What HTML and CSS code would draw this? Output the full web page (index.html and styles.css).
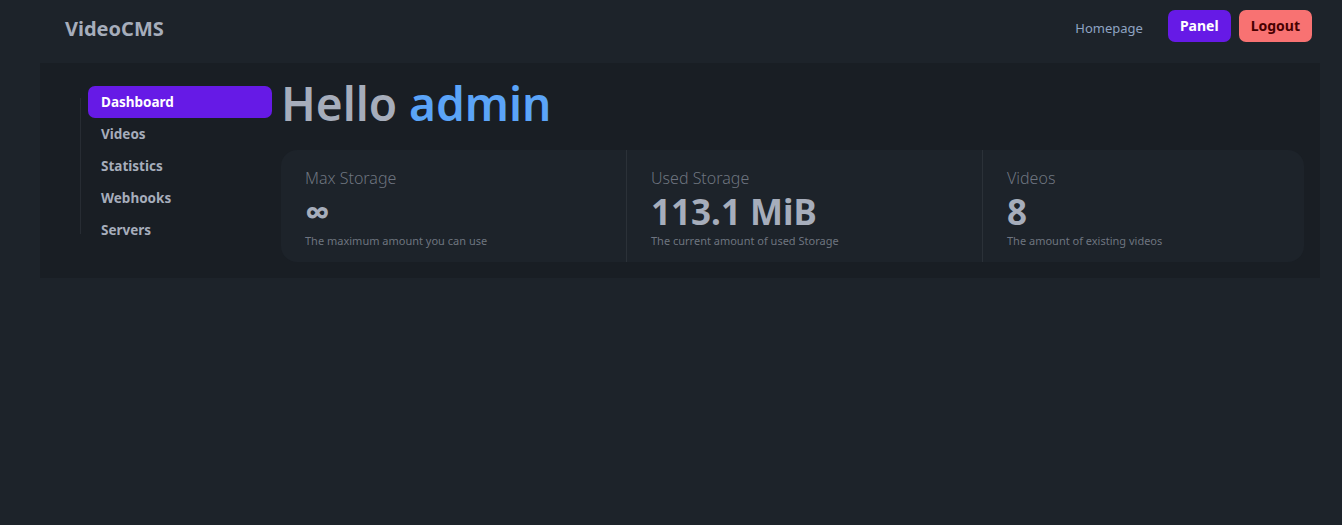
FILE: index.html
```html
<!DOCTYPE html>
<html lang="en">
<head>
<meta charset="utf-8">
<title>VideoCMS</title>
<link rel="stylesheet" href="styles.css">
</head>
<body>
<header class="navbar">
  <a class="brand" href="#">VideoCMS</a>
  <nav class="nav-actions">
    <a class="nav-link" href="#">Homepage</a>
    <a class="btn btn-primary" href="#">Panel</a>
    <a class="btn btn-error" href="#">Logout</a>
  </nav>
</header>
<main class="panel">
  <aside class="sidebar">
    <ul class="menu">
      <li><a class="menu-item active" href="#">Dashboard</a></li>
      <li><a class="menu-item" href="#">Videos</a></li>
      <li><a class="menu-item" href="#">Statistics</a></li>
      <li><a class="menu-item" href="#">Webhooks</a></li>
      <li><a class="menu-item" href="#">Servers</a></li>
    </ul>
  </aside>
  <section class="content">
    <h1 class="greeting">Hello <span class="accent">admin</span></h1>
    <div class="stats">
      <div class="stat">
        <div class="stat-title">Max Storage</div>
        <div class="stat-value">∞</div>
        <div class="stat-desc">The maximum amount you can use</div>
      </div>
      <div class="stat">
        <div class="stat-title">Used Storage</div>
        <div class="stat-value">113.1 MiB</div>
        <div class="stat-desc">The current amount of used Storage</div>
      </div>
      <div class="stat">
        <div class="stat-title">Videos</div>
        <div class="stat-value">8</div>
        <div class="stat-desc">The amount of existing videos</div>
      </div>
    </div>
  </section>
</main>
</body>
</html>
```

FILE: styles.css
```css
* { box-sizing: border-box; }

html, body {
  margin: 0;
  padding: 0;
}

body {
  background: #1d232a;
  color: #a6adbb;
  font-family: "Noto Sans", "Open Sans", sans-serif;
  min-height: 525px;
}

a { text-decoration: none; color: inherit; }

.navbar {
  height: 63px;
  display: flex;
  align-items: center;
  justify-content: space-between;
  padding: 0 30px 0 65px;
}

.brand {
  font-size: 20px;
  font-weight: 700;
  color: #a6adbb;
  margin-top: -6px;
}

.nav-actions {
  display: flex;
  align-items: center;
  gap: 8px;
  margin-top: -12px;
}

.nav-link {
  font-size: 13px;
  color: #8fa3c2;
  margin-right: 17px;
  margin-top: 4px;
}

.btn {
  height: 32px;
  display: flex;
  align-items: center;
  justify-content: center;
  padding: 0 12px 1px;
  border-radius: 7px;
  font-size: 14px;
  font-weight: 700;
}

.btn-primary {
  background: #661ae6;
  color: #ffffff;
}

.btn-error {
  background: #f87272;
  color: #470000;
}

.panel {
  width: 1280px;
  margin-left: 40px;
  background: #191e24;
  display: flex;
  gap: 9px;
  padding: 16px 16px 16px 40px;
}

.sidebar {
  width: 192px;
  flex-shrink: 0;
}

.menu {
  list-style: none;
  margin: 7px 0 0 0;
  padding: 0 0 0 8px;
  position: relative;
}

.menu::before {
  content: "";
  position: absolute;
  left: 0;
  top: 12px;
  bottom: 12px;
  width: 1px;
  background: rgba(166, 173, 187, 0.1);
}

.menu-item {
  display: flex;
  align-items: center;
  height: 32px;
  padding: 0 13px 1px;
  border-radius: 7px;
  font-size: 13.5px;
  font-weight: 700;
  color: #a6adbb;
}

.menu-item.active {
  background: #661ae6;
  color: #ffffff;
}

.content {
  flex: 1;
  min-width: 0;
}

.greeting {
  margin: 0 0 23px 0;
  font-size: 46px;
  line-height: 48px;
  font-weight: 600;
  color: #a6adbb;
}

.accent { color: #5ba4f8; }

.stats {
  display: grid;
  grid-template-columns: 345fr 356fr 322fr;
  background: #1d232a;
  border-radius: 16px;
}

.stat {
  padding: 17px 24px 14px;
  display: flex;
  flex-direction: column;
}

.stat + .stat {
  border-left: 1px solid rgba(166, 173, 187, 0.1);
}

.stat-title {
  font-size: 16px;
  line-height: 22px;
  font-weight: 300;
  color: rgba(166, 173, 187, 0.6);
}

.stat-value {
  font-size: 35px;
  line-height: 45px;
  font-weight: 700;
  color: #a6adbb;
}

.stat-desc {
  font-size: 11px;
  line-height: 14px;
  color: rgba(166, 173, 187, 0.6);
}
```
